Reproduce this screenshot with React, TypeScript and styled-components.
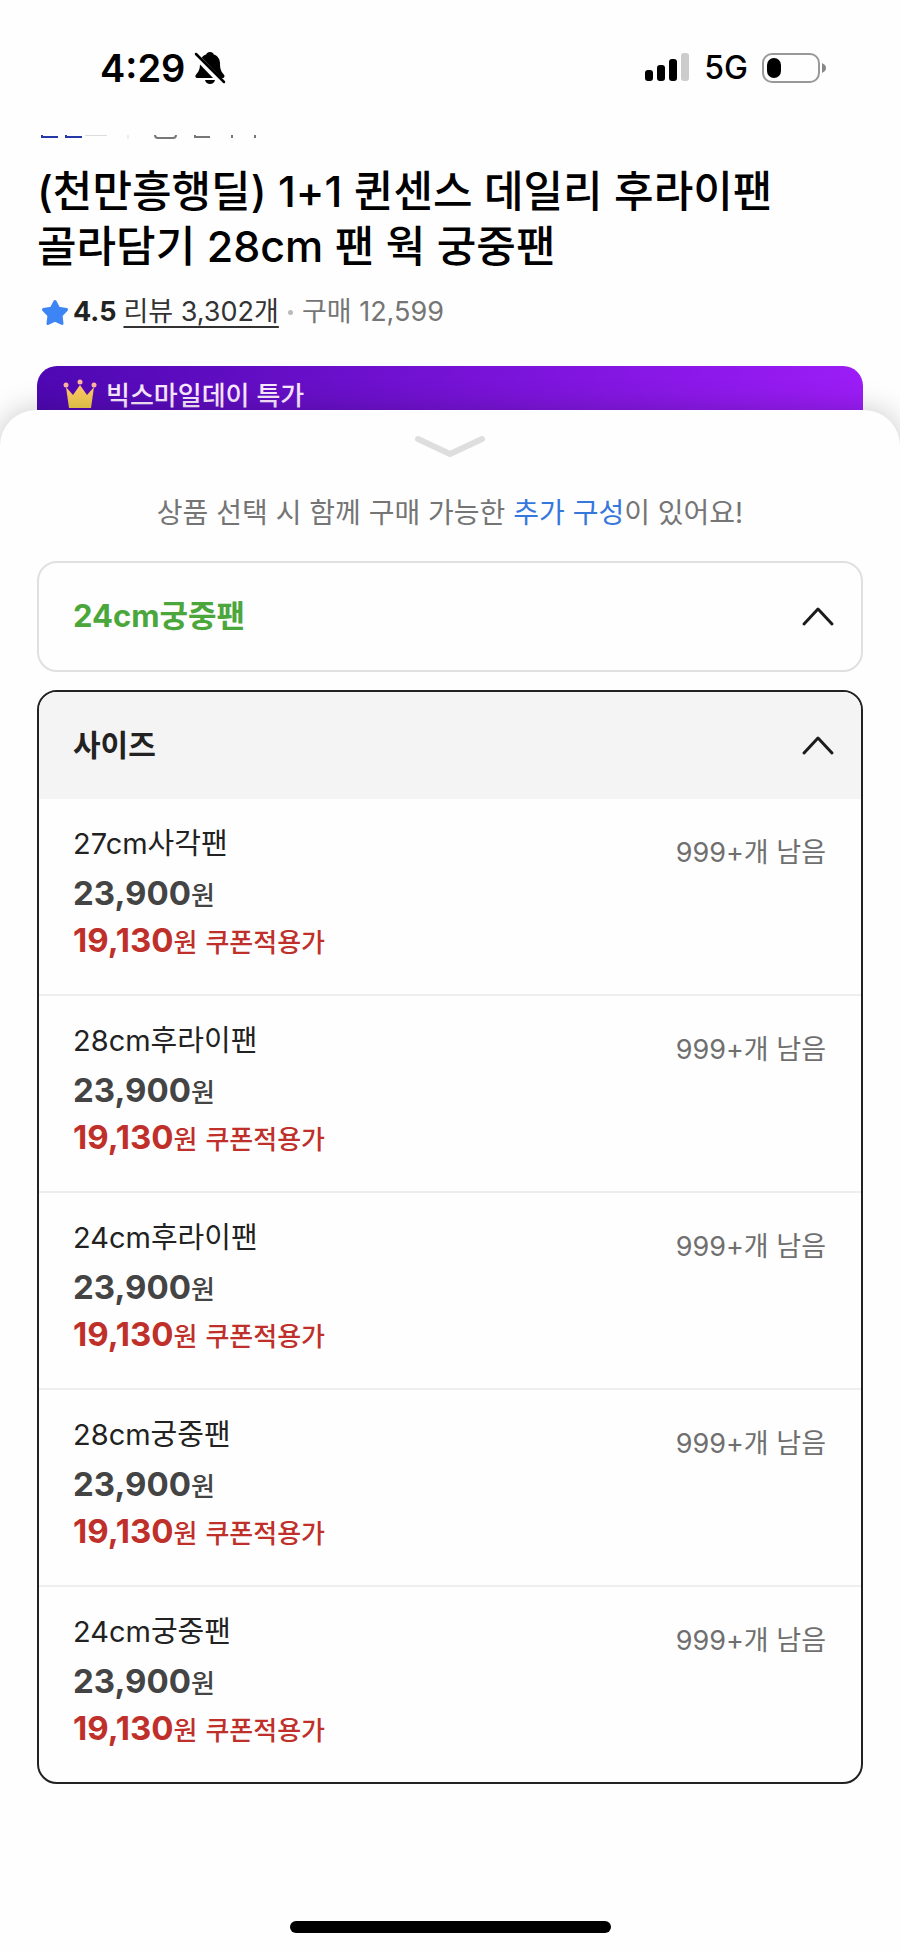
import React from "react";
import styled, { createGlobalStyle } from "styled-components";

const GlobalStyle = createGlobalStyle`
  *, *::before, *::after { box-sizing: border-box; }
  body {
    margin: 0;
    background: #fefefe;
    color: #222;
    font-family: Inter, "Noto Sans CJK KR", sans-serif;
    -webkit-font-smoothing: antialiased;
  }
  button { font: inherit; color: inherit; cursor: pointer; }
`;

const Screen = styled.div`
  display: flex;
  flex-direction: column;
  min-height: 100vh;
`;

const StatusBar = styled.header`
  display: flex;
  align-items: center;
  justify-content: space-between;
  height: 135px;
  padding: 0 74px 0 100px;
  color: #000;
`;

const StatusGroup = styled.div<{ $gap: number }>`
  display: flex;
  align-items: center;
  gap: ${(p) => p.$gap}px;
`;

const Clock = styled.time`
  font-size: 38px;
  line-height: 48px;
  font-weight: 600;
`;

const Network = styled.span`
  font-size: 32px;
  line-height: 48px;
  font-weight: 500;
`;

const Product = styled.section`
  padding: 0 37px;
`;

const ScrolledLine = styled.svg`
  display: block;
`;

const Title = styled.h1`
  margin: 24px 0 0;
  font-size: 43px;
  line-height: 55px;
  font-weight: 500;
  color: #000;
`;

const Rating = styled.div`
  display: flex;
  align-items: center;
  height: 40px;
  margin-top: 18px;
  padding-left: 4px;
  font-size: 27px;
  line-height: 40px;
`;

const Score = styled.strong`
  margin: 0 7px 0 4px;
  font-weight: 700;
`;

const ReviewLink = styled.a`
  color: #333;
  text-decoration: underline;
  text-decoration-thickness: 2px;
  text-underline-offset: 5px;
`;

const Dot = styled.span`
  width: 5px;
  height: 5px;
  margin: 0 9px;
  border-radius: 50%;
  background: #bbb;
`;

const Purchases = styled.span`
  color: #757575;
`;

const Banner = styled.div`
  display: flex;
  align-items: flex-start;
  gap: 9px;
  height: 84px;
  margin-top: 34px;
  padding: 12px 26px;
  border-radius: 20px;
  background: linear-gradient(100deg, #4e08b2, #9d1df8);
  color: #fbe9ff;
  font-size: 26px;
  line-height: 36px;
  font-weight: 500;
`;

const Sheet = styled.main`
  position: relative;
  display: flex;
  flex-direction: column;
  flex: 1;
  margin-top: -40px;
  padding: 0 37px 18px;
  border-radius: 36px 36px 0 0;
  background: #fefefe;
  box-shadow: 0 0 30px rgba(0, 0, 0, 0.22);
`;

const Handle = styled.button`
  align-self: center;
  display: block;
  height: 52px;
  margin-top: 13px;
  padding: 0;
  border: 0;
  background: none;
`;

const Notice = styled.p`
  margin: 18px 0 28px;
  text-align: center;
  font-size: 28px;
  line-height: 40px;
  color: #757575;
`;

const Accent = styled.span`
  color: #3577dd;
`;

const Option = styled.section<{ $open?: boolean }>`
  overflow: hidden;
  margin-bottom: 18px;
  border: 2px solid ${(p) => (p.$open ? "#222" : "#e0e0e0")};
  border-radius: 20px;
`;

const OptionHeader = styled.button<{ $tone: "picked" | "heading" }>`
  display: flex;
  align-items: center;
  justify-content: space-between;
  width: 100%;
  height: 107px;
  padding: 0 25px 2px 34px;
  border: 0;
  background: ${(p) => (p.$tone === "heading" ? "#f4f4f4" : "transparent")};
  color: ${(p) => (p.$tone === "heading" ? "#222" : "#4ba63b")};
  font-size: ${(p) => (p.$tone === "heading" ? 30 : 31)}px;
  line-height: 40px;
  font-weight: 700;
`;

const ItemList = styled.ul`
  margin: 0;
  padding: 0;
  list-style: none;
`;

const Item = styled.li`
  & + & { border-top: 2px solid #eee; }
`;

const ItemButton = styled.button`
  display: flex;
  align-items: flex-start;
  justify-content: space-between;
  width: 100%;
  height: 195px;
  padding: 25px 35px 0 34px;
  border: 0;
  background: none;
  text-align: left;
  font-size: 29px;
  line-height: 40px;
`;

const ItemText = styled.span`
  display: flex;
  flex-direction: column;
`;

const Price = styled.span<{ $sale?: boolean }>`
  height: 47px;
  line-height: 47px;
  font-size: 33px;
  font-weight: 700;
  color: ${(p) => (p.$sale ? "#c0302a" : "#444")};
`;

const ItemName = styled.span`
  margin-bottom: 6px;
`;

const Won = styled.span`
  font-size: 26px;
  font-weight: 500;
`;

const Coupon = styled.span`
  margin-left: 8px;
  font-size: 26px;
  font-weight: 500;
`;

const Stock = styled.span`
  margin-top: 9px;
  font-size: 27px;
  color: #6f6f6f;
`;

const HomeBar = styled.div`
  align-self: center;
  width: 321px;
  height: 12px;
  margin-top: auto;
  border-radius: 6px;
  background: #000;
`;

const Chevron = () => (
  <svg width="36" height="24" viewBox="0 0 36 24" fill="none" stroke="#1c1c1c" strokeWidth="3" strokeLinecap="round" strokeLinejoin="round" aria-hidden="true">
    <path d="M4 20 L18 5 L32 20" />
  </svg>
);

const items = ["27cm사각팬", "28cm후라이팬", "24cm후라이팬", "28cm궁중팬", "24cm궁중팬"];

export default function App() {
  return (
    <>
      <GlobalStyle />
      <Screen>
        <StatusBar>
          <StatusGroup $gap={9}>
            <Clock>4:29</Clock>
            <svg width="32" height="34" viewBox="0 0 32 34" aria-label="무음">
              <path d="M16 1c2 0 3.400 1 3.800 2.600 4 1.300 6.200 4.700 6.200 9 0 6 1.300 8 3.600 10.600 1.600 1.800 1 3.800-1.200 3.800H3.600c-2.200 0-3-2-1.300-3.800C4.700 20.600 6 18.600 6 12.600c0-4.300 2.200-7.700 6.200-9C12.600 2 14 1 16 1z" fill="#000" />
              <path d="M11 29h10c-.6 2.600-2.500 4-5 4s-4.400-1.400-5-4z" fill="#000" />
              <path d="M0 3 L29 33" stroke="#fefefe" strokeWidth="6" />
              <path d="M2 3 L30 31" stroke="#000" strokeWidth="2.500" strokeLinecap="round" />
            </svg>
          </StatusGroup>
          <StatusGroup $gap={14}>
            <svg width="45" height="29" viewBox="0 0 45 29" aria-label="신호">
              <rect x="0" y="17" width="8" height="11" rx="3" />
              <rect x="12" y="12" width="8" height="16" rx="3" />
              <rect x="24" y="6" width="8" height="22" rx="3" />
              <rect x="36" y="0" width="8" height="28" rx="3" fill="#ccc" />
            </svg>
            <Network>5G</Network>
            <svg width="64" height="30" viewBox="0 0 64 30" aria-label="배터리">
              <rect x="1" y="1" width="56" height="28" rx="9" fill="none" stroke="#999" strokeWidth="2" />
              <rect x="5" y="5" width="14" height="20" rx="7" />
              <path d="M60 10c3 1.500 4 3 4 5s-1 3.500-4 5z" fill="#888" />
            </svg>
          </StatusGroup>
        </StatusBar>

        <Product>
          <ScrolledLine width="222" height="5" viewBox="0 0 222 5" fill="none" aria-hidden="true">
            <path d="M5 0v2H21M29 0v2H45" stroke="#2638a8" strokeWidth="2" />
            <path d="M48 0h22" stroke="#bbb" />
            <path d="M91 0v4" stroke="#ddd" />
            <path d="M118 0c0 2 1 3 3 3h15c2 0 3-1 3-3M158 0v2h15M195 0v3M218 0v3" stroke="#777" strokeWidth="2" />
          </ScrolledLine>
          <Title>
            (천만흥행딜) 1+1 퀸센스 데일리 후라이팬
            <br />
            골라담기 28cm 팬 웍 궁중팬
          </Title>
          <Rating>
            <svg width="28" height="27" viewBox="0 0 28 27" aria-hidden="true">
              <path d="M14 2.500 L17.600 9.200 L25.500 10.600 L20 16.400 L21 24.500 L14 21.200 L7 24.500 L8 16.400 L2.500 10.600 L10.400 9.200 Z" fill="#3d85f5" stroke="#3d85f5" strokeWidth="3" strokeLinejoin="round" />
            </svg>
            <Score>4.5</Score>
            <ReviewLink href="#reviews">리뷰 3,302개</ReviewLink>
            <Dot />
            <Purchases>구매 12,599</Purchases>
          </Rating>
          <Banner>
            <svg width="34" height="32" viewBox="0 0 34 32" aria-hidden="true">
              <defs>
                <linearGradient id="crown" x1="0" y1="0" x2="0" y2="1">
                  <stop offset="0" stopColor="#ffc46b" />
                  <stop offset="1" stopColor="#f0cf4a" />
                </linearGradient>
              </defs>
              <path d="M3 9 L10 17 L17 7 L24 17 L31 9 L28 30 H6 Z" fill="url(#crown)" />
              <circle cx="3" cy="7" r="2.500" fill="#ffb3a0" />
              <circle cx="17" cy="4" r="2.500" fill="#ffb3a0" />
              <circle cx="31" cy="7" r="2.500" fill="#ffb3a0" />
            </svg>
            <span>빅스마일데이 특가</span>
          </Banner>
        </Product>

        <Sheet>
          <Handle aria-label="닫기">
            <svg width="72" height="26" viewBox="0 0 72 26" fill="none" stroke="#dedede" strokeWidth="6" strokeLinecap="round" strokeLinejoin="round" aria-hidden="true">
              <path d="M4 5 L36 20 L68 5" />
            </svg>
          </Handle>
          <Notice>
            상품 선택 시 함께 구매 가능한 <Accent>추가 구성</Accent>이 있어요!
          </Notice>

          <Option>
            <OptionHeader $tone="picked">
              <span>24cm궁중팬</span>
              <Chevron />
            </OptionHeader>
          </Option>

          <Option $open>
            <OptionHeader $tone="heading" aria-expanded="true">
              <span>사이즈</span>
              <Chevron />
            </OptionHeader>
            <ItemList>
              {items.map((name) => (
                <Item key={name}>
                  <ItemButton>
                    <ItemText>
                      <ItemName>{name}</ItemName>
                      <Price>
                        23,900<Won>원</Won>
                      </Price>
                      <Price $sale>
                        19,130<Won>원</Won>
                        <Coupon>쿠폰적용가</Coupon>
                      </Price>
                    </ItemText>
                    <Stock>999+개 남음</Stock>
                  </ItemButton>
                </Item>
              ))}
            </ItemList>
          </Option>
          <HomeBar />
        </Sheet>
      </Screen>
    </>
  );
}
